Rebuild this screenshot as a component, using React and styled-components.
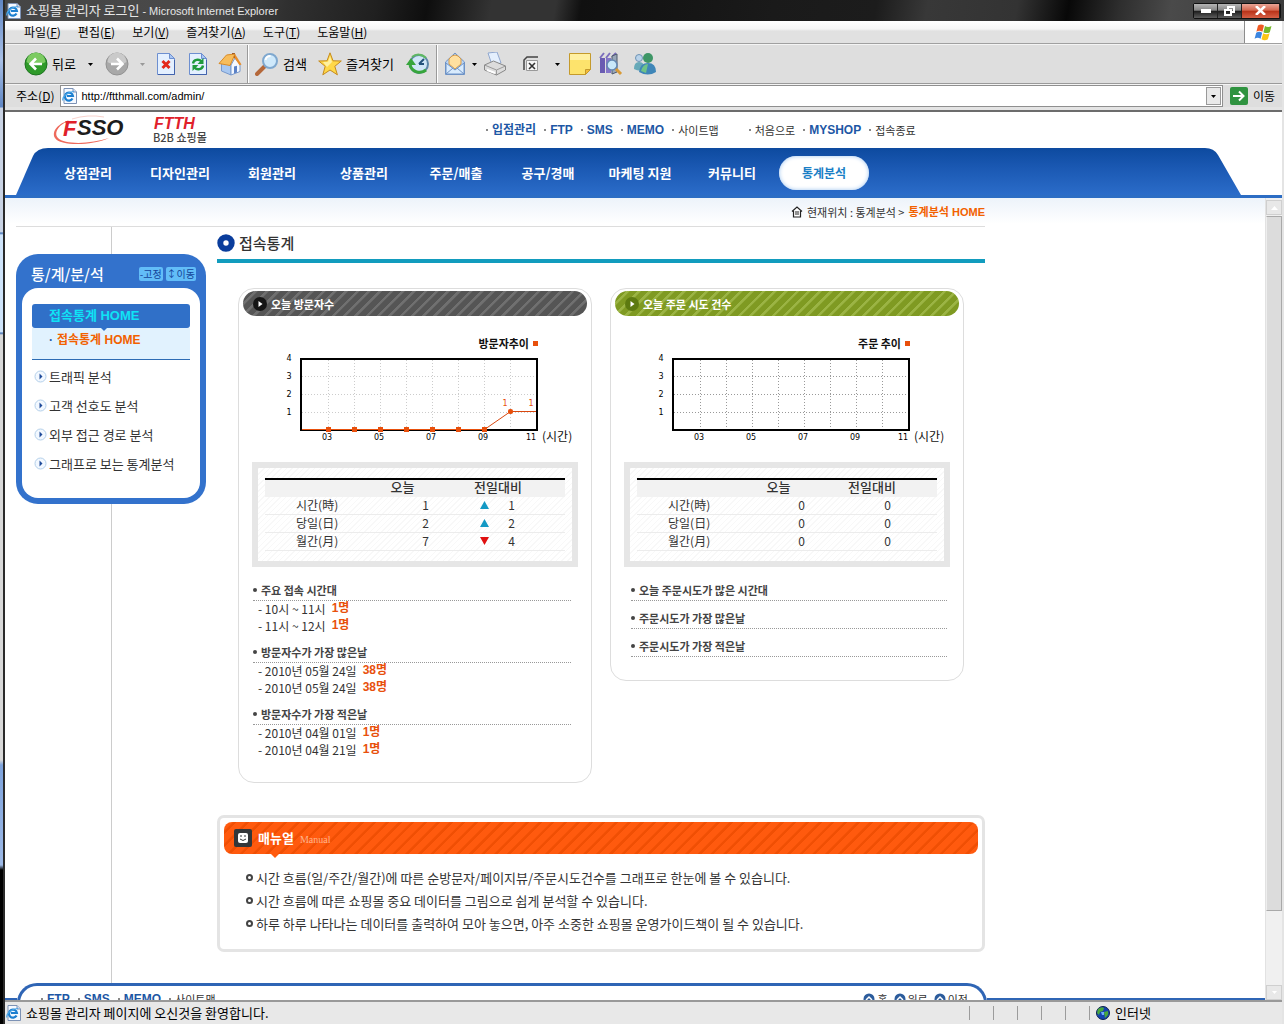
import React from "react";
import styled, { createGlobalStyle } from 'styled-components';

const GlobalStyle = createGlobalStyle`
    *, *::before, *::after {
        box-sizing: border-box;
    }

    body {
        margin: 0;
        background: #dfdfdf;
        color: #333;
        font-family: "Noto Sans CJK KR", "Liberation Sans", sans-serif;
        font-size: 12px;
        line-height: 18px;
    }

    button {
        border: none;
        padding: 0;
        margin: 0;
        background: none;
        color: inherit;
        font: inherit;
        cursor: pointer;
    }

    a {
        color: inherit;
        text-decoration: none;
    }

    ul {
        list-style: none;
        margin: 0;
        padding: 0;
    }

    svg {
        display: block;
        flex: none;
    }

    h1, h2, h3 {
        margin: 0;
    }
`

/* ---------- browser window ---------- */

const Desktop = styled.div`
    display: flex;
    height: 100vh;
    overflow: hidden;
`

const DesktopEdge = styled.div`
    flex: none;
    width: 5px;
    border-right: 2px solid #2a2a2a;
    background: linear-gradient(#5f86c4 0, #a9c0e6 60px, #5f86c4 107px, #c9d3e4 108px, #c9d3e4 232px, #3c6bb0 233px, #cfe4fa 235px, #cfe4fa 332px, #3c6bb0 333px, #d8d8d8 335px, #d8d8d8 760px, #7ea3dc 765px, #9db9e6 865px, #000 870px);
`

const Window = styled.div`
    flex: 1;
    min-width: 0;
    display: flex;
    flex-direction: column;
    border-right: 2px solid #e4e4e4;
`

const TitleBar = styled.header`
    flex: none;
    display: flex;
    align-items: center;
    height: 21px;
    margin-right: -2px;
    padding: 0 3px 0 1px;
    gap: 4px;
    color: #e6e6e6;
    font-size: 13px;
    background: linear-gradient(100deg, #454545 0%, #4a4a4a 16%, #303030 22%, #202020 29%, #0e0e0e 33%, #333 38%, #333 43%, #101010 45%, #1a1a1a 60%, #1c1c1c 68%, #383838 72%, #333 79%, #080808 83%, #2e2e2e 87%, #4a4a4a 91%, #3a3a3a 100%);

    span {
        flex: 1;
        white-space: nowrap;
    }

    small {
        font-family: "Liberation Sans", sans-serif;
        font-size: 11px;
    }
`

const WindowButtons = styled.div`
    display: flex;
    border: 1px solid #111;
    border-radius: 2px;
`

const WindowButton = styled.button`
    display: flex;
    align-items: center;
    justify-content: center;
    width: ${props => props.$close ? 38 : 24}px;
    height: 14px;
    border-right: 1px solid #222;
    background: ${props => props.$close
        ? 'linear-gradient(#e9a596 0, #d4664e 45%, #b83218 50%, #d65f45)'
        : 'linear-gradient(#b5b5b5 0, #858585 45%, #1c1c1c 50%, #5c5c5c)'};
`

const MenuBar = styled.nav`
    flex: none;
    display: flex;
    height: 23px;
    padding-left: 19px;
    gap: 17px;
    color: #000;
    border-bottom: 1px solid #a0a0a0;
    background: linear-gradient(#fff 0, #f6f6f6 8px, #e1e1e1 10px, #e1e1e1);

    button {
        white-space: nowrap;
    }
`

const FlagBox = styled.div`
    display: flex;
    align-items: center;
    justify-content: center;
    width: 38px;
    margin-left: auto;
    background: #fff;
    border-left: 1px solid #8c8c8c;
`

const ToolBar = styled.div`
    flex: none;
    display: flex;
    align-items: center;
    height: 40px;
    padding-left: 15px;
    color: #000;
    font-size: 13px;
    border-top: 1px solid #f4f4f4;
    border-bottom: 1px solid #9a9a9a;
    background: #dedede;
`

const ToolButton = styled.button`
    display: flex;
    align-items: center;
    justify-content: center;
    flex: none;
    gap: 4px;
    width: ${props => props.$width}px;
    height: 32px;
    white-space: nowrap;
`

const Separator = styled.div`
    width: 2px;
    height: 38px;
    margin: 0 2px 0 1px;
    border-left: 1px solid #9a9a9a;
    border-right: 1px solid #fff;
`

const AddressBar = styled.form`
    flex: none;
    display: flex;
    align-items: center;
    height: 26px;
    padding-bottom: 3px;
    color: #000;
    border-top: 1px solid #f4f4f4;
    background: #dedede;
    box-shadow: inset 0 -3px #e4e4e4;

    label {
        padding: 0 6px 0 11px;
        white-space: nowrap;
    }
`

const AddressField = styled.div`
    flex: 1;
    display: flex;
    align-items: center;
    align-self: stretch;
    padding: 0 1px;
    gap: 3px;
    background: #fff;
    border: 1px solid #8f8f8f;

    input {
        flex: 1;
        min-width: 0;
        border: none;
        outline: none;
        padding: 0;
        background: none;
        color: #000;
        font-family: "Liberation Sans", sans-serif;
        font-size: 11px;
        line-height: 18px;
    }
`

const DropButton = styled.button`
    display: flex;
    align-items: center;
    justify-content: center;
    width: 15px;
    height: 18px;
    border: 1px solid #999;
    background: #e9e9e9;
`

const GoButton = styled.button`
    display: flex;
    align-items: center;
    gap: 5px;
    padding: 0 7px;
`

const StatusBar = styled.footer`
    flex: none;
    display: flex;
    align-items: center;
    height: 24px;
    padding-left: 1px;
    color: #000;
    font-size: 13px;
    border-top: 2px solid #999;
    background: #e8e8e8;

    p {
        flex: 1;
        margin: 0;
        padding-left: 4px;
        white-space: nowrap;
    }
`

const StatusCells = styled.div`
    display: flex;

    i {
        width: 24px;
        height: 14px;
        border-left: 1px solid #9c9c9c;
    }
`

const Zone = styled.div`
    display: flex;
    align-items: center;
    gap: 5px;
    width: 193px;
    height: 14px;
    padding-left: 6px;
    border-left: 1px solid #9c9c9c;
`

/* ---------- shop header ---------- */

const ShopHeader = styled.header`
    flex: none;
    background: #fff;
    border-top: 2px solid #6c6c6c;
    border-bottom: 3px solid #2c6dc4;
`

const HeaderTop = styled.div`
    display: flex;
    align-items: center;
    height: 36px;
    padding: 0 0 1px 45px;
`

const LinkGroup = styled.div`
    display: flex;
    gap: 8px;
    margin-left: ${props => props.$gap}px;
    font-size: 11px;
    white-space: nowrap;
`

const TopLink = styled.a`
    display: flex;
    align-items: center;
    height: 18px;
    color: ${props => props.$strong ? '#1d57a5' : '#333'};
    font-family: ${props => props.$strong ? '"Liberation Sans", "Noto Sans CJK KR"' : '"Noto Sans CJK KR"'}, sans-serif;
    font-size: ${props => props.$strong ? 12 : 11}px;
    font-weight: ${props => props.$strong ? 700 : 400};

    &::before {
        content: "";
        width: 2px;
        height: 2px;
        margin-right: 4px;
        background: #888;
    }
`

const NavBar = styled.nav`
    display: flex;
    margin: 0 41px 0 11px;
`

const NavItems = styled.ul`
    flex: 1;
    min-width: 0;
    display: flex;
    align-items: center;
    height: 47px;
    padding-top: 3px;
    background: linear-gradient(#0d4a9f, #1a58b2 40%, #2b6cc9);
`

const NavItem = styled.li`
    flex: none;
    width: 92px;
    text-align: center;

    &:first-child {
        margin-left: -6px;
    }

    a {
        display: block;
        margin: 0 1px;
        line-height: 34px;
        border-radius: 17px;
        font-size: ${props => props.$active ? 12 : 13}px;
        font-weight: 700;
        color: ${props => props.$active ? '#1b7fc6' : '#fff'};
        background: ${props => props.$active ? '#fff' : 'none'};
        box-shadow: ${props => props.$active ? 'inset 0 0 4px #9cc4f0' : 'none'};
    }
`

/* ---------- page ---------- */

const PageFrame = styled.div`
    flex: 1;
    min-height: 0;
    display: flex;
    background: #fff;
`

const Page = styled.div`
    flex: 1;
    min-width: 0;
    overflow-y: auto;
    scrollbar-width: none;
    background: linear-gradient(#edf3fa 0, #fff 26px);
`

const Content = styled.div`
    max-width: 980px;
    padding-left: 11px;
`

const Breadcrumb = styled.div`
    display: flex;
    align-items: center;
    justify-content: flex-end;
    gap: 4px;
    height: 29px;
    font-size: 11px;
    border-bottom: 1px solid #ddd;

    strong {
        font-family: "Liberation Sans", "Noto Sans CJK KR", sans-serif;
        color: #f26100;
    }
`

const Columns = styled.div`
    display: grid;
    grid-template-columns: 190px minmax(0, 1fr);
    gap: 11px;
`

const SideColumn = styled.aside`
    display: flex;
    flex-direction: column;
    align-items: center;
`

const Connector = styled.div`
    width: 1px;
    height: 27px;
    flex: ${props => props.$grow ? 1 : 'none'};
    background: #ccc;
`

const SideBox = styled.section`
    width: 100%;
    padding: 0 6px 6px;
    border-radius: 22px;
    background: #3372cc;
`

const SideHead = styled.div`
    display: flex;
    align-items: center;
    height: 34px;
    padding: 6px 4px 0 9px;
    gap: 3px;

    h2 {
        flex: 1;
        color: #fff;
        font-size: 15px;
        font-weight: 500;
    }

    button {
        padding: 0 1px;
        border-radius: 2px;
        background: #62bdf8;
        color: #14449a;
        font-size: 10px;
        line-height: 14px;
        white-space: nowrap;
    }
`

const SideBody = styled.div`
    padding: 16px 10px 20px;
    border-radius: 16px;
    background: #fff;
`

const SideCurrent = styled.a`
    display: block;
    height: 24px;
    padding-left: 17px;
    border-radius: 3px;
    background: #3070c8;
    color: #0fe3f5;
    font-family: "Liberation Sans", "Noto Sans CJK KR", sans-serif;
    font-size: 13px;
    font-weight: 700;
    line-height: 24px;
`

const SideSub = styled.div`
    position: relative;
    display: flex;
    gap: 4px;
    height: 32px;
    margin-bottom: 2px;
    padding-left: 17px;
    border-bottom: 1px solid #2d6cb4;
    background: #e1f2fe;
    color: #f26100;
    font-family: "Liberation Sans", "Noto Sans CJK KR", sans-serif;
    font-weight: 700;
    line-height: 24px;

    &::after {
        content: "";
        position: absolute;
        top: 0;
        left: 69px;
        border: 3px solid transparent;
        border-top-color: #3070c8;
        border-bottom: none;
    }

    span {
        color: #2a5ca8;
    }
`

const SideLink = styled.a`
    display: flex;
    align-items: center;
    gap: 2px;
    height: 29px;
    padding-left: 2px;
    font-size: 13px;
    white-space: nowrap;
`

const PageTitle = styled.div`
    display: flex;
    align-items: center;
    gap: 4px;
    height: 36px;
    border-bottom: 4px solid #129cbe;

    h1 {
        color: #333;
        font-size: 15px;
        font-weight: 500;
    }
`

const Cards = styled.div`
    display: grid;
    grid-template-columns: 1fr 1fr;
    align-items: start;
    gap: 18px;
    padding: 25px 21px 0;
`

const Card = styled.section`
    border: 1px solid #ddd;
    border-radius: 16px;
    padding-bottom: 23px;
`

const CardHead = styled.div`
    display: flex;
    align-items: center;
    gap: 3px;
    height: 25px;
    margin: 2px 4px 0;
    padding-left: 10px;
    border-radius: 13px;
    background: repeating-linear-gradient(135deg, ${props => props.$stripe} 0 2px, ${props => props.$color} 3px 8px);

    h2 {
        padding: 0 8px 0 1px;
        color: #fff;
        font-size: 11px;
        font-weight: 700;
    }
`

const Legend = styled.div`
    display: flex;
    align-items: center;
    justify-content: flex-end;
    gap: 4px;
    padding: 19px 53px 0 0;
    color: #111;
    font-size: 11px;
    font-weight: 700;
    line-height: 16px;

    i {
        width: 5px;
        height: 5px;
        background: #e8500c;
    }
`

const StatBox = styled.div`
    margin: 0 13px 6px;
    padding: 10px 7px;
    border: 6px solid #e6e6e6;
    background: repeating-linear-gradient(135deg, #f8f8f8 0 1px, #fff 1px 4px);
`

const StatTable = styled.table`
    width: 100%;
    table-layout: fixed;
    border-collapse: separate;
    border-spacing: 0;
    border-top: 2px solid #000;
    color: #333;
    line-height: 16px;

    th, td {
        padding: 0;
        height: 18px;
        text-align: left;
        font-weight: 400;
        vertical-align: top;
    }

    thead th {
        height: 17px;
        background: #f2f2f2;
        text-align: center;
        font-size: 13px;
        font-weight: 500;
        line-height: 14px;
    }

    thead th:last-child {
        padding-right: 9px;
    }

    tbody th {
        padding-left: 31px;
    }

    tbody td, tbody th {
        border-bottom: 1px solid #ececec;
    }

    tbody td:nth-child(2) {
        padding-right: 11px;
        text-align: right;
    }
`

const Change = styled.div`
    display: flex;
    align-items: center;
    justify-content: ${props => props.$trend ? 'space-between' : 'flex-end'};
    width: 35px;
    margin-left: 40px;
`

const Record = styled.section`
    margin: 0 ${props => props.$indent ? 16 : 20}px 0 ${props => props.$indent ? 20 : 14}px;

    h3 {
        display: flex;
        align-items: center;
        gap: 4px;
        height: 28px;
        padding-top: 7px;
        border-bottom: 1px dotted #999;
        color: #444;
        font-size: 11px;
        font-weight: 700;
    }

    h3::before {
        content: "";
        width: 4px;
        height: 4px;
        border-radius: 50%;
        background: #444;
    }

    li {
        display: flex;
        gap: 6px;
        height: 17px;
        padding-left: 5px;
        line-height: 15px;
        white-space: nowrap;
    }

    strong {
        color: #e8500c;
        font-family: "Liberation Sans", "Noto Sans CJK KR", sans-serif;
    }
`

const Manual = styled.section`
    margin: 32px 0 31px;
    padding: 4px 4px 14px;
    border: 3px solid #e4e4e4;
    border-radius: 7px;

    ul {
        padding: 12px 0 0 22px;
    }

    li {
        display: flex;
        align-items: center;
        gap: 3px;
        font-size: 13px;
        line-height: 23px;
    }

    li::before {
        content: "";
        width: 7px;
        height: 7px;
        border: 2px solid #444;
        border-radius: 50%;
    }
`

const ManualHead = styled.div`
    position: relative;
    display: flex;
    align-items: center;
    gap: 6px;
    height: 32px;
    padding-left: 10px;
    border-radius: 8px;
    background: repeating-linear-gradient(135deg, #ff5a0e 0 6px, #f04f04 7px 9px);

    &::after {
        content: "";
        position: absolute;
        top: 32px;
        left: 47px;
        border: 4px solid transparent;
        border-top-color: #ff5a0e;
        border-bottom: none;
    }

    h2 {
        color: #fff;
        font-size: 13px;
        font-weight: 700;
    }

    small {
        padding-top: 4px;
        color: #ffb48c;
        font-family: "Liberation Serif", serif;
        font-size: 10px;
    }
`

const PageFooter = styled.footer`
    display: flex;
`

const FooterEdge = styled.div`
    flex: ${props => props.$grow ? '1' : '0 0 12px'};
    height: 18px;
    border-bottom: 3px solid #2f65b5;
`

const FooterBody = styled.div`
    flex: 0 1 970px;
    display: flex;
    justify-content: space-between;
    height: 34px;
    padding: 4px 16px 0 7px;
    border: 3px solid #2f65b5;
    border-bottom: none;
    border-radius: 20px 20px 0 0;
    background: #fff;
`

const FooterNav = styled.div`
    display: flex;
    gap: 6px;
    font-size: 11px;

    a {
        display: flex;
        align-items: center;
        gap: 2px;
        height: 18px;
    }
`

const ScrollTrack = styled.div`
    flex: none;
    display: flex;
    flex-direction: column;
    width: 17px;
    padding: 2px 0 0;
    background: #f0f0f0;
    border-left: 1px solid #e2e2e2;

    button {
        display: flex;
        align-items: center;
        justify-content: center;
        height: 15px;
        border: 1px solid #cfcfcf;
        background: #e8e8e8;
    }
`

const ScrollThumb = styled.div`
    flex: 1;
    margin: 1px 0 74px;
    border: 1px solid #a9a9a9;
    border-left-color: #eee;
    background: #dcdcdc;
`

/* ---------- icons ---------- */

const IeIcon = () => (
    <svg width="16" height="16" viewBox="0 0 16 16">
        <path d="M2 0.5h9l3.500 3.500v11.500h-12.500z" fill="#f5f9ff" stroke="#7d92b5" />
        <path d="M11 0.500v3.500h3.500" fill="#cfdcf2" stroke="#7d92b5" />
        <path d="M10.500 10.500a4 4 0 1 1 .4-2.500h-6" fill="none" stroke="#1c7fd0" strokeWidth="2.200" />
        <path d="M1 12.500C-0.500 9 6 3.500 12 3.500" fill="none" stroke="#4aa7e8" strokeWidth="1.200" />
    </svg>
)

const Flag = () => (
    <svg width="20" height="19" viewBox="0 0 20 19">
        <path d="M4 2.500c2-1.500 4-1.500 6 0l-1.600 6.200c-2-1.200-4-1.200-6 0z" fill="#ee5a24" />
        <path d="M11 3c2 1.300 4.200 1.300 6.500 0l-1.700 6.200c-2.200 1.200-4.400 1.200-6.400 0z" fill="#76b82a" />
        <path d="M2.200 9.800c2-1.300 4-1.300 6 0l-1.600 6c-2-1.300-4-1.300-6 0z" fill="#3c86e0" />
        <path d="M9.200 10.300c2 1.200 4.200 1.200 6.400 0l-1.700 6c-2.200 1.400-4.400 1.300-6.400 0z" fill="#fbc516" />
    </svg>
)

const Caret = ({ color = '#000' }) => (
    <svg width="5" height="3" viewBox="0 0 5 3"><path d="M0 0h5l-2.500 3z" fill={color} /></svg>
)

const RoundArrow = ({ back }) => (
    <svg width="24" height="24" viewBox="0 0 24 24">
        <circle cx="12" cy="12" r="11" fill={back ? '#2f9a2a' : '#a8a8a8'} stroke={back ? '#1d7420' : '#929292'} />
        <path d="M2.500 10a9.500 9.500 0 0 1 19 0c-4 3-15 3-19 0z" fill={back ? '#7ccb62' : '#cacaca'} />
        <path d={back ? 'M18 12H7M12 6.500L6.500 12l5.500 5.500' : 'M6 12h11M12 6.500l5.500 5.500-5.500 5.500'} fill="none" stroke="#fff" strokeWidth="2.600" />
    </svg>
)

const Sheet = ({ children }) => (
    <svg width="22" height="24" viewBox="0 0 22 24">
        <path d="M2.500 1.500h12l5 5v16h-17z" fill="#e4f0ff" stroke="#6d8fd0" />
        <path d="M14.500 1.500v5h5z" fill="#a9c6f4" stroke="#6d8fd0" />
        <path d="M3 22.500h16.500V8" fill="none" stroke="#4263ad" />
        {children}
    </svg>
)

const StopIcon = () => (
    <Sheet><path d="M7.500 9l7 7M14.500 9l-7 7" stroke="#e3281c" strokeWidth="3" /></Sheet>
)

const RefreshIcon = () => (
    <Sheet>
        <path d="M6 11.500c.5-4 6-5 8.500-2" fill="none" stroke="#1f9a3c" strokeWidth="2.400" />
        <path d="M16.500 6v6h-6z" fill="#1f9a3c" />
        <path d="M16 13.500c-.5 4-6 5-8.500 2" fill="none" stroke="#1f9a3c" strokeWidth="2.400" />
        <path d="M5.500 19v-6h6z" fill="#1f9a3c" />
    </Sheet>
)

const HomeIcon = () => (
    <svg width="24" height="24" viewBox="0 0 24 24">
        <path d="M14 1h3v5h-3z" fill="#8a4a2a" />
        <path d="M3.500 12l6-3 3.500 4v10l-9.500-4z" fill="#a9c8f0" stroke="#7798cc" />
        <path d="M13 13l4-7 5 6.500v7L13 23z" fill="#f4f8ff" stroke="#7798cc" />
        <path d="M1 11.500L8.500 3 17 2l-5 11.500z" fill="#f7bd5c" stroke="#d98a26" />
        <path d="M17 2l6.500 10.500-2 .8L16.500 6z" fill="#e88d2a" />
        <path d="M16 14.500l3-.7v6.700l-3 1z" fill="#5b81c6" />
    </svg>
)

const SearchIcon = () => (
    <svg width="24" height="24" viewBox="0 0 24 24">
        <path d="M10 14l-8 8" stroke="#b5683a" strokeWidth="4" strokeLinecap="round" />
        <circle cx="15" cy="9" r="7" fill="#cfe9fb" stroke="#7fa8cf" strokeWidth="2" />
        <path d="M10.500 8a5 5 0 0 1 5-4" fill="none" stroke="#fff" strokeWidth="2" />
    </svg>
)

const StarIcon = () => (
    <svg width="24" height="24" viewBox="0 0 24 24">
        <path d="M12 .8l3 8 8.300.2-6.500 5.300 2.600 8.500L12 18l-7.200 4.800 2.400-8.500L.7 9l8.300-.2z" fill="#ffd848" stroke="#c58a1c" />
        <path d="M12 4l2 6-5 5-4-5 5-.3z" fill="#fff0a0" />
    </svg>
)

const HistoryIcon = () => (
    <svg width="24" height="24" viewBox="0 0 24 24">
        <circle cx="13" cy="12" r="9" fill="#cfe6f7" stroke="#5c86a8" strokeWidth="2" />
        <path d="M13 12l5-5M13 12h5" stroke="#24527c" strokeWidth="2" />
        <path d="M20 18A10 10 0 0 1 4 13" fill="none" stroke="#37a53c" strokeWidth="3" />
        <path d="M0 13l5-7 5 7z" fill="#37a53c" />
        <path d="M6 5a10 10 0 0 1 14 1" fill="none" stroke="#5fb863" strokeWidth="2" />
    </svg>
)

const MailIcon = () => (
    <svg width="22" height="24" viewBox="0 0 22 24">
        <path d="M1.500 10L11 1l9.500 9v12.500h-19z" fill="#b9d5f6" stroke="#6f93c6" />
        <path d="M5 12V7q6-8 12 0v5l-6 5z" fill="#ffe0a0" stroke="#d59a48" />
        <path d="M2 11l9 7 9-7v11H2z" fill="#d8ebfd" stroke="#6f93c6" />
        <path d="M2 22l7-6M20 22l-7-6" stroke="#6f93c6" />
    </svg>
)

const PrintIcon = () => (
    <svg width="24" height="24" viewBox="0 0 24 24">
        <path d="M5 1l9-1 4 11-9 2z" fill="#e4effd" stroke="#91a8cf" />
        <path d="M1.500 13l9-4 12 5v4l-9 5-12-5z" fill="#dcdcdc" stroke="#888" />
        <path d="M1.500 13l12 5 9-4M13.500 18v5" fill="none" stroke="#9a9a9a" />
        <path d="M4 18l8 3" stroke="#fff" strokeWidth="2" />
    </svg>
)

const EditIcon = () => (
    <svg width="18" height="18" viewBox="0 0 18 18">
        <path d="M2 15V5l3-3h11" fill="none" stroke="#444" strokeWidth="1.500" />
        <path d="M4.500 5.500h11v10h-11z" fill="#f6f6f6" stroke="#999" />
        <path d="M7 8l6 6M13 8l-6 6" stroke="#333" strokeWidth="1.600" />
    </svg>
)

const NoteIcon = () => (
    <svg width="24" height="24" viewBox="0 0 24 24">
        <path d="M1.500 1.500h21v16l-5 5h-16z" fill="#fde36c" stroke="#c49a2c" />
        <path d="M2 2h20v6H2z" fill="#fff0a2" />
        <path d="M17.500 22.500v-5h5z" fill="#f3bb3a" stroke="#c49a2c" />
    </svg>
)

const BooksIcon = () => (
    <svg width="24" height="24" viewBox="0 0 24 24">
        <path d="M1 6h5v15H1z" fill="#6a5cb2" />
        <path d="M7 6h5v15H7z" fill="#8576c9" />
        <path d="M1 6l4-5M7 6l4-5M13 5l4-4" stroke="#7b6dbd" strokeWidth="2" />
        <path d="M13 4l5-2v18l-5 2z" fill="#9aa7b8" stroke="#4d586c" />
        <circle cx="13" cy="13" r="5" fill="#c9e8fa" stroke="#6488b2" strokeWidth="1.500" />
        <path d="M17 17l5 5" stroke="#d99a35" strokeWidth="3" />
    </svg>
)

const PeopleIcon = () => (
    <svg width="24" height="24" viewBox="0 0 24 24">
        <circle cx="6" cy="6" r="3.500" fill="#b9d3ea" stroke="#6e93b4" />
        <path d="M1 17q0-7 5-7 6 0 6 8-6 2-11-1z" fill="#67a9b8" />
        <circle cx="15" cy="6" r="5" fill="#3e9666" />
        <path d="M6 20q1-9 9-9 8 0 8 9-8 5-17 0z" fill="#3f86b8" />
        <path d="M8 19q2-7 7-7l-2 9z" fill="#6fc387" />
    </svg>
)

const GoIcon = () => (
    <svg width="18" height="18" viewBox="0 0 18 18">
        <rect width="18" height="18" rx="2" fill="#2f9340" />
        <path d="M3 9h10M9 4.500L13.500 9 9 13.500" fill="none" stroke="#fff" strokeWidth="2" />
    </svg>
)

const GlobeIcon = () => (
    <svg width="14" height="14" viewBox="0 0 14 14">
        <circle cx="7" cy="7" r="6.500" fill="#1443b0" stroke="#0b1f4d" />
        <path d="M2 3q4-3 6-1l-1 3-3 1-1 3-2-2z" fill="#49a83c" />
        <path d="M8 6l4-1q1 3-1 5l-2 2z" fill="#49a83c" />
        <path d="M5 6h3v3H6z" fill="#6fa8ff" />
    </svg>
)

const SideBullet = () => (
    <svg width="13" height="13" viewBox="0 0 13 13">
        <circle cx="6.500" cy="6.500" r="5.500" fill="#f2f8ff" stroke="#b4d0ea" />
        <path d="M5.500 3.500l3 3-3 3z" fill="#1f4b9a" />
    </svg>
)

const PillBullet = ({ color }) => (
    <svg width="14" height="14" viewBox="0 0 14 14">
        <circle cx="7" cy="7" r="7" fill={color} />
        <path d="M5.500 4l4 3-4 3z" fill="#fff" />
    </svg>
)

const Ring = () => (
    <svg width="18" height="18" viewBox="0 0 18 18">
        <circle cx="9" cy="9" r="5.700" fill="#fff" stroke="#0a3d9c" strokeWidth="6" />
    </svg>
)

const SmallHome = () => (
    <svg width="12" height="12" viewBox="0 0 12 12">
        <path d="M1 5.500L6 1l5 4.500M2.500 5v6h7V5" fill="#fff" stroke="#222" strokeWidth="1.200" />
        <path d="M4 6h4M4 8h4" stroke="#222" />
    </svg>
)

const ManualIcon = () => (
    <svg width="18" height="18" viewBox="0 0 18 18">
        <rect width="18" height="18" rx="2" fill="#33373a" />
        <rect x="4" y="4" width="10" height="10" rx="2" fill="#fff" />
        <path d="M6 7h2M10 7h2M6 10q3 3 6 0" fill="none" stroke="#33373a" />
    </svg>
)

const UpIcon = () => (
    <svg width="12" height="12" viewBox="0 0 12 12">
        <circle cx="6" cy="6" r="5.500" fill="#2c5c9c" />
        <path d="M3 7l3-3 3 3" fill="none" stroke="#fff" strokeWidth="1.500" />
    </svg>
)

const Trend = ({ up }) => (
    <svg width="9" height="8" viewBox="0 0 9 8">
        <path d={up ? 'M4.500 0L9 8H0z' : 'M0 0h9L4.500 8z'} fill={up ? '#1499c4' : '#e01010'} />
    </svg>
)

const FssoLogo = () => (
    <svg width="78" height="32" viewBox="0 0 78 32">
        <path d="M20 6C9 9 1 17 5 24c5 8 36 8 54 0-18 6-44 7-51 0-5-6 2-14 12-18z" fill="#ee6a5c" />
        <path d="M22 5q16-5 32-2" fill="none" stroke="#f8d2cc" />
        <path d="M15 8h6" stroke="#e0202a" strokeDasharray="2 1" />
        <g fontFamily="Liberation Sans, sans-serif" fontWeight="700" fontStyle="italic" fontSize="22">
            <text x="13" y="22" fill="#e0202a">F</text>
            <text x="27" y="21" fill="#1c1c1c">SSO</text>
        </g>
    </svg>
)

const FtthLogo = () => (
    <svg width="60" height="32" viewBox="0 0 60 32">
        <text x="1" y="15" fill="#e0202a" fontFamily="Liberation Sans, sans-serif" fontWeight="700" fontStyle="italic" fontSize="16">FTTH</text>
        <text x="0" y="28" fill="#444" fontFamily="Noto Sans CJK KR, sans-serif" fontWeight="500" fontSize="11">B2B 쇼핑몰</text>
    </svg>
)

const NavCap = ({ right }) => (
    <svg width={right ? 36 : 32} height="47" viewBox={right ? '0 0 36 47' : '0 0 32 47'}>
        <defs>
            <linearGradient id={right ? 'capRight' : 'capLeft'} x1="0" y1="0" x2="0" y2="1">
                <stop offset="0" stopColor="#0d4a9f" />
                <stop offset="0.400" stopColor="#1a58b2" />
                <stop offset="1" stopColor="#2b6cc9" />
            </linearGradient>
        </defs>
        <path
            d={right ? 'M0 0Q9 0 13 7L36 47H0z' : 'M32 0Q21 0 17 8L0 47H32z'}
            fill={right ? 'url(#capRight)' : 'url(#capLeft)'}
        />
    </svg>
)

/* ---------- chart ---------- */

const CHART = { left: 62, top: 8, width: 236, height: 71 }
const columnX = index => 89 + index * 26
const valueY = value => 79 - value * 18

const hourLabels = [['03', 88], ['05', 140], ['07', 192], ['09', 244], ['11', 292]]

const Chart = ({ label, points, gridColor }) => (
    <svg width="352" height="111" viewBox="0 0 352 111" role="img" aria-label={label}>
        <g stroke={gridColor} strokeDasharray="1 2">
            {[1, 2, 3].map(value => (
                <path key={value} d={`M63 ${valueY(value) + .5}H297`} />
            ))}
            {[0, 1, 2, 3, 4, 5, 6, 7].map(index => (
                <path key={index} d={`M${columnX(index) + .5} 9V78`} />
            ))}
        </g>
        <rect x={CHART.left} y={CHART.top} width={CHART.width} height={CHART.height} fill="none" stroke="#000" strokeWidth="2" />
        <g fill="#000" fontFamily="DejaVu Sans, sans-serif" fontSize="8" textAnchor="middle">
            {[1, 2, 3, 4].map(value => (
                <text key={value} x="50" y={valueY(value) + 3}>{value}</text>
            ))}
            {hourLabels.map(([hour, x]) => (
                <text key={hour} x={x} y="89">{hour}</text>
            ))}
        </g>
        <text x="303" y="90" fill="#111" fontSize="12">(시간)</text>
        {points.length > 0 && (
            <g fill="#e8500c">
                <path d="M63 78.500H245" stroke="#e8500c" />
                <polyline
                    points={`${points.map((v, i) => `${columnX(i) + .5},${valueY(v) - .5}`).slice(-2).join(' ')} 297,60.5`}
                    fill="none"
                    stroke="#d9480f"
                />
                {points.map((v, i) => (
                    <rect key={i} x={columnX(i) - 2} y={valueY(v) - 3} width="5" height="5" rx={v ? 2 : 0} />
                ))}
                <g fontFamily="DejaVu Sans, sans-serif" fontSize="8" textAnchor="middle">
                    <text x="266" y="55">1</text>
                    <text x="292" y="55">1</text>
                </g>
            </g>
        )}
    </svg>
)

/* ---------- data ---------- */

const menus = [['파일', 'F'], ['편집', 'E'], ['보기', 'V'], ['즐겨찾기', 'A'], ['도구', 'T'], ['도움말', 'H']]

const navItems = ['상점관리', '디자인관리', '회원관리', '상품관리', '주문/매출', '공구/경매', '마케팅 지원', '커뮤니티', '통계분석']

const sideLinks = ['트래픽 분석', '고객 선호도 분석', '외부 접근 경로 분석', '그래프로 보는 통계분석']

const visitRows = [
    { name: '시간(時)', today: 1, change: 1, trend: 'up' },
    { name: '당일(日)', today: 2, change: 2, trend: 'up' },
    { name: '월간(月)', today: 7, change: 4, trend: 'down' },
]

const orderRows = [
    { name: '시간(時)', today: 0, change: 0 },
    { name: '당일(日)', today: 0, change: 0 },
    { name: '월간(月)', today: 0, change: 0 },
]

const visitRecords = [
    { title: '주요 접속 시간대', items: [['10시 ~ 11시', '1명'], ['11시 ~ 12시', '1명']] },
    { title: '방문자수가 가장 많은날', items: [['2010년 05월 24일', '38명'], ['2010년 05월 24일', '38명']] },
    { title: '방문자수가 가장 적은날', items: [['2010년 04월 01일', '1명'], ['2010년 04월 21일', '1명']] },
]

const orderRecords = ['오늘 주문시도가 많은 시간대', '주문시도가 가장 많은날', '주문시도가 가장 적은날']

const manualLines = [
    '시간 흐름(일/주간/월간)에 따른 순방문자/페이지뷰/주문시도건수를 그래프로 한눈에 볼 수 있습니다.',
    '시간 흐름에 따른 쇼핑몰 중요 데이터를 그림으로 쉽게 분석할 수 있습니다.',
    '하루 하루 나타나는 데이터를 출력하여 모아 놓으면, 아주 소중한 쇼핑몰 운영가이드책이 될 수 있습니다.',
]

const Stats = ({ rows, labelWidth }) => (
    <StatBox>
        <StatTable>
            <colgroup>
                <col style={{ width: labelWidth }} />
                <col style={{ width: 75 }} />
                <col />
            </colgroup>
            <thead>
                <tr>
                    <th aria-label="구분" />
                    <th scope="col">오늘</th>
                    <th scope="col">전일대비</th>
                </tr>
            </thead>
            <tbody>
                {rows.map(row => (
                    <tr key={row.name}>
                        <th scope="row">{row.name}</th>
                        <td>{row.today}</td>
                        <td>
                            <Change $trend={row.trend}>
                                {row.trend && <Trend up={row.trend === 'up'} />}
                                {row.change}
                            </Change>
                        </td>
                    </tr>
                ))}
            </tbody>
        </StatTable>
    </StatBox>
)

const BrowserBars = () => (
    <>
        <TitleBar>
            <IeIcon />
            <span>쇼핑몰 관리자 로그인 <small>- Microsoft Internet Explorer</small></span>
            <WindowButtons>
                <WindowButton aria-label="최소화">
                    <svg width="10" height="4"><path d="M0 0h10v4H0z" fill="#fff" /></svg>
                </WindowButton>
                <WindowButton aria-label="이전 크기로 복원">
                    <svg width="11" height="10" viewBox="0 0 11 10">
                        <path d="M4 3V1h6v5H8M1 4h6v5H1z" fill="none" stroke="#fff" strokeWidth="2" />
                    </svg>
                </WindowButton>
                <WindowButton $close aria-label="닫기">
                    <svg width="11" height="9" viewBox="0 0 11 9">
                        <path d="M1 0l9 9M10 0L1 9" stroke="#fff" strokeWidth="2.500" />
                    </svg>
                </WindowButton>
            </WindowButtons>
        </TitleBar>
        <MenuBar>
            {menus.map(([name, key]) => (
                <button key={key}>{name}(<u>{key}</u>)</button>
            ))}
            <FlagBox><Flag /></FlagBox>
        </MenuBar>
        <ToolBar>
            <ToolButton $width={60}><RoundArrow back />뒤로</ToolButton>
            <ToolButton $width={20} aria-label="뒤로 목록"><Caret /></ToolButton>
            <ToolButton $width={34} aria-label="앞으로"><RoundArrow /></ToolButton>
            <ToolButton $width={16} aria-label="앞으로 목록"><Caret color="#999" /></ToolButton>
            <ToolButton $width={32} aria-label="중지"><StopIcon /></ToolButton>
            <ToolButton $width={32} aria-label="새로 고침"><RefreshIcon /></ToolButton>
            <ToolButton $width={32} aria-label="홈"><HomeIcon /></ToolButton>
            <Separator />
            <ToolButton $width={60}><SearchIcon />검색</ToolButton>
            <ToolButton $width={90}><StarIcon />즐겨찾기</ToolButton>
            <ToolButton $width={34} aria-label="목록"><HistoryIcon /></ToolButton>
            <Separator />
            <ToolButton $width={30} aria-label="메일"><MailIcon /></ToolButton>
            <ToolButton $width={8} aria-label="메일 목록"><Caret /></ToolButton>
            <ToolButton $width={34} aria-label="인쇄"><PrintIcon /></ToolButton>
            <ToolButton $width={38} aria-label="편집"><EditIcon /></ToolButton>
            <ToolButton $width={14} aria-label="편집 목록"><Caret /></ToolButton>
            <ToolButton $width={32} aria-label="메모"><NoteIcon /></ToolButton>
            <ToolButton $width={30} aria-label="리서치"><BooksIcon /></ToolButton>
            <ToolButton $width={38} aria-label="메신저"><PeopleIcon /></ToolButton>
        </ToolBar>
        <AddressBar onSubmit={e => e.preventDefault()}>
            <label htmlFor="address">주소(<u>D</u>)</label>
            <AddressField>
                <IeIcon />
                <input id="address" type="text" defaultValue="http://ftthmall.com/admin/" />
                <DropButton type="button" aria-label="주소 목록"><Caret /></DropButton>
            </AddressField>
            <GoButton type="submit"><GoIcon />이동</GoButton>
        </AddressBar>
    </>
)

const Header = () => (
    <ShopHeader>
        <HeaderTop>
            <FssoLogo />
            <LinkGroup $gap={25}><FtthLogo /></LinkGroup>
            <LinkGroup $gap={273}>
                <TopLink href="#" $strong>입점관리</TopLink>
                <TopLink href="#" $strong>FTP</TopLink>
                <TopLink href="#" $strong>SMS</TopLink>
                <TopLink href="#" $strong>MEMO</TopLink>
                <TopLink href="#">사이트맵</TopLink>
            </LinkGroup>
            <LinkGroup $gap={30}>
                <TopLink href="#">처음으로</TopLink>
                <TopLink href="#" $strong>MYSHOP</TopLink>
                <TopLink href="#">접속종료</TopLink>
            </LinkGroup>
        </HeaderTop>
        <NavBar>
            <NavCap />
            <NavItems>
                {navItems.map(item => (
                    <NavItem key={item} $active={item === '통계분석'}><a href="#">{item}</a></NavItem>
                ))}
            </NavItems>
            <NavCap right />
        </NavBar>
    </ShopHeader>
)

const Sidebar = () => (
    <SideColumn>
        <Connector />
        <SideBox>
            <SideHead>
                <h2>통/계/분/석</h2>
                <button>-고정</button>
                <button>↕이동</button>
            </SideHead>
            <SideBody>
                <SideCurrent href="#">접속통계 HOME</SideCurrent>
                <SideSub><span>·</span><a href="#">접속통계 HOME</a></SideSub>
                {sideLinks.map(link => (
                    <SideLink key={link} href="#"><SideBullet />{link}</SideLink>
                ))}
            </SideBody>
        </SideBox>
        <Connector $grow />
    </SideColumn>
)

export const App = () => {
    return (
        <Desktop>
            <GlobalStyle />
            <DesktopEdge />
            <Window>
                <BrowserBars />
                <Header />
                <PageFrame>
                    <Page>
                        <Content>
                            <Breadcrumb>
                                <SmallHome />
                                <span>현재위치 : 통계분석 &gt;</span>
                                <strong>통계분석 HOME</strong>
                            </Breadcrumb>
                            <Columns>
                                <Sidebar />
                                <main>
                                    <PageTitle>
                                        <Ring />
                                        <h1>접속통계</h1>
                                    </PageTitle>
                                    <Cards>
                                        <Card>
                                            <CardHead $color="#555" $stripe="#707070">
                                                <PillBullet color="#151515" />
                                                <h2>오늘 방문자수</h2>
                                            </CardHead>
                                            <Legend>방문자추이<i /></Legend>
                                            <Chart label="방문자추이" points={[0, 0, 0, 0, 0, 0, 0, 1]} gridColor="#ccc" />
                                            <Stats rows={visitRows} labelWidth={100} />
                                            {visitRecords.map(record => (
                                                <Record key={record.title}>
                                                    <h3>{record.title}</h3>
                                                    <ul>
                                                        {record.items.map(([when, count], i) => (
                                                            <li key={i}>- {when} <strong>{count}</strong></li>
                                                        ))}
                                                    </ul>
                                                </Record>
                                            ))}
                                        </Card>
                                        <Card>
                                            <CardHead $color="#7f9a22" $stripe="#9bb444">
                                                <PillBullet color="#5d7a10" />
                                                <h2>오늘 주문 시도 건수</h2>
                                            </CardHead>
                                            <Legend>주문 추이<i /></Legend>
                                            <Chart label="주문 추이" points={[]} gridColor="#999" />
                                            <Stats rows={orderRows} labelWidth={104} />
                                            {orderRecords.map(title => (
                                                <Record key={title} $indent><h3>{title}</h3></Record>
                                            ))}
                                        </Card>
                                    </Cards>
                                    <Manual>
                                        <ManualHead>
                                            <ManualIcon />
                                            <h2>매뉴얼</h2>
                                            <small>Manual</small>
                                        </ManualHead>
                                        <ul>
                                            {manualLines.map(line => <li key={line}>{line}</li>)}
                                        </ul>
                                    </Manual>
                                </main>
                            </Columns>
                        </Content>
                        <PageFooter>
                            <FooterEdge />
                            <FooterBody>
                                <LinkGroup $gap={14}>
                                    <TopLink href="#" $strong>FTP</TopLink>
                                    <TopLink href="#" $strong>SMS</TopLink>
                                    <TopLink href="#" $strong>MEMO</TopLink>
                                    <TopLink href="#">사이트맵</TopLink>
                                </LinkGroup>
                                <FooterNav>
                                    <a href="#"><UpIcon />홈</a>
                                    <a href="#"><UpIcon />위로</a>
                                    <a href="#"><UpIcon />이전</a>
                                </FooterNav>
                            </FooterBody>
                            <FooterEdge $grow />
                        </PageFooter>
                    </Page>
                    <ScrollTrack>
                        <button aria-label="위로 스크롤"><svg width="7" height="4"><path d="M0 4h7L3.500 0z" fill="#fff" /></svg></button>
                        <ScrollThumb />
                        <button aria-label="아래로 스크롤"><Caret color="#fff" /></button>
                    </ScrollTrack>
                </PageFrame>
                <StatusBar>
                    <IeIcon />
                    <p>쇼핑몰 관리자 페이지에 오신것을 환영합니다.</p>
                    <StatusCells><i /><i /><i /><i /><i /></StatusCells>
                    <Zone><GlobeIcon />인터넷</Zone>
                </StatusBar>
            </Window>
        </Desktop>
    )
}

export default App;
